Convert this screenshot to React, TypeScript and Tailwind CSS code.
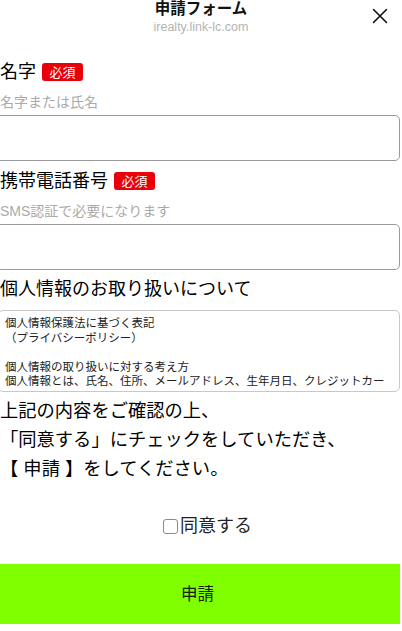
import React from "react";

const font = { fontFamily: '"Liberation Sans","Noto Sans CJK JP",sans-serif' };

function Badge() {
  return (
    <span className="inline-flex h-[18px] w-[41px] items-center justify-center rounded-[3px] bg-[#e8000b] text-[13px] leading-none text-white">
      必須
    </span>
  );
}

export default function App() {
  return (
    <div className="relative h-[631px] w-[402px] overflow-hidden bg-white text-black" style={font}>
      <div className="relative flex flex-col items-center">
        <div className="text-[15.5px] font-bold leading-[18px] text-[#111]">申請フォーム</div>
        <div className="text-[12.5px] leading-[18px] text-[#b4b4b4]">irealty.link-lc.com</div>
        <svg
          className="absolute right-[14px] top-[8px]"
          width="16"
          height="16"
          viewBox="0 0 16 16"
          fill="none"
          stroke="#111"
          strokeWidth="1.6"
          strokeLinecap="round"
        >
          <path d="M1.5 1.5 L14.5 14.5 M14.5 1.5 L1.5 14.5" />
        </svg>
      </div>

      <div className="mt-[27px] flex h-[18px] items-center gap-[6px]">
        <span className="text-[18px] leading-[18px]">名字</span>
        <Badge />
      </div>
      <div className="mt-[11px] text-[14px] leading-[20px] text-[#aaaaaa]">名字または氏名</div>
      <div className="ml-[-4px] mt-[3px] h-[46px] w-[404px] rounded-[5px] border border-[#9a9a9a]" />

      <div className="mt-[11px] flex h-[18px] items-center gap-[6px]">
        <span className="text-[18px] leading-[18px]">携帯電話番号</span>
        <Badge />
      </div>
      <div className="mt-[11px] text-[14px] leading-[20px] text-[#aaaaaa]">SMS認証で必要になります</div>
      <div className="ml-[-4px] mt-[3px] h-[46px] w-[404px] rounded-[5px] border border-[#9a9a9a]" />

      <div className="mt-[7px] text-[18px] leading-[24px]">個人情報のお取り扱いについて</div>

      <div className="ml-[-2px] mt-[9px] h-[82px] w-[402px] overflow-hidden whitespace-nowrap rounded-[5px] border border-[#c8c8c8] pl-[6px] pt-[5px] text-[11.5px] leading-[14.5px] text-[#222]">
        <div>個人情報保護法に基づく表記</div>
        <div>（プライバシーポリシー）</div>
        <div>&nbsp;</div>
        <div>個人情報の取り扱いに対する考え方</div>
        <div>個人情報とは、氏名、住所、メールアドレス、生年月日、クレジットカー</div>
      </div>

      <div className="mt-[4px] text-[18.3px] leading-[29px]">
        <div>上記の内容をご確認の上、</div>
        <div>「同意する」にチェックをしていただき、</div>
        <div>【 申請 】をしてください。</div>
      </div>

      <div className="mt-[31px] flex h-[24px] items-center justify-center pl-[13px]">
        <span className="mr-[2px] inline-block h-[15px] w-[15px] rounded-[3px] border border-[#8a8a8a] bg-white" />
        <span className="text-[18px] leading-[24px] text-[#222]">同意する</span>
      </div>

      <div className="mt-[26px] flex h-[60px] w-[400px] items-center justify-center bg-[#7fff00] pr-[5px] text-[16.5px] text-[#122000]">
        申請
      </div>
    </div>
  );
}
